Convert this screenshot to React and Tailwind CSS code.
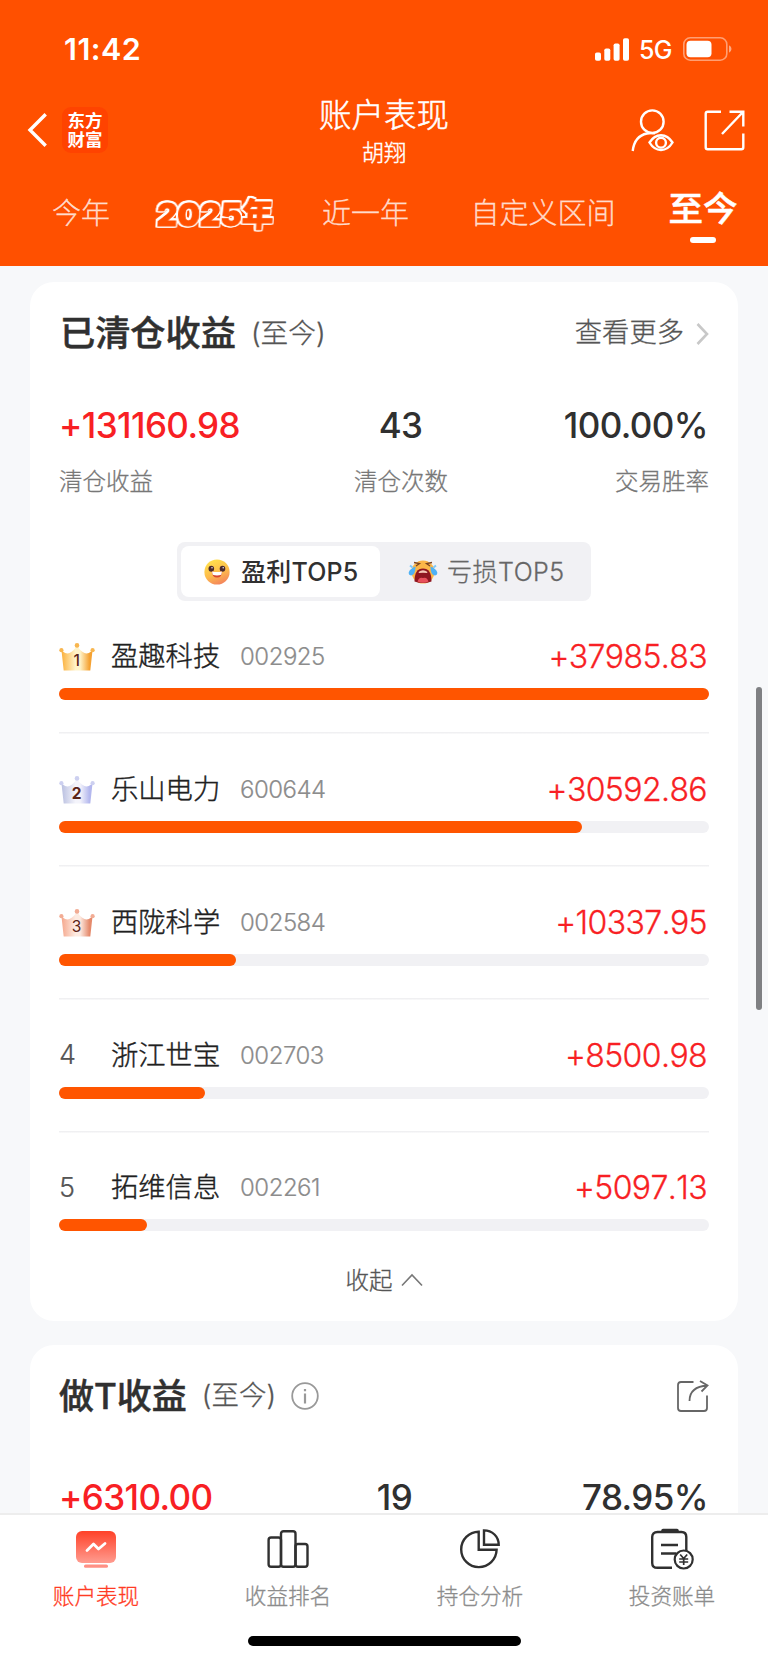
import React from "react";

const rows = [
  { rank: 1, name: "盈趣科技", code: "002925", value: "+37985.83", width: 100 },
  { rank: 2, name: "乐山电力", code: "600644", value: "+30592.86", width: 80.5 },
  { rank: 3, name: "西陇科学", code: "002584", value: "+10337.95", width: 27.2 },
  { rank: 4, name: "浙江世宝", code: "002703", value: "+8500.98", width: 22.5 },
  { rank: 5, name: "拓维信息", code: "002261", value: "+5097.13", width: 13.5 },
];

const crowns = {
  1: { edge: "#fbb03b", mid: "#fff3c9", end: "#f5a233", dot: "#f8b64f", weight: 500 },
  2: { edge: "#b9bfe0", mid: "#f4f4fb", end: "#b4b8ee", dot: "#cdd0f0", weight: 700 },
  3: { edge: "#f5a78c", mid: "#fdebe2", end: "#e58a6c", dot: "#f2ac94", weight: 400 },
};

function Crown({ rank }) {
  const c = crowns[rank];
  const id = "crown" + rank;
  return (
    <svg width="36" height="28" viewBox="0 0 36 28" className="block">
      <defs>
        <linearGradient id={id} x1="0" y1="0" x2="1" y2="0">
          <stop offset="0" stopColor={c.edge} />
          <stop offset="0.45" stopColor={c.mid} />
          <stop offset="0.6" stopColor={c.mid} />
          <stop offset="0.9" stopColor={c.end} />
        </linearGradient>
      </defs>
      <path d="M2.500 7.500Q7 11.500 10.500 10Q15 8 18 2.500Q21 8 25.500 10Q29 11.500 33.500 7.500L31.300 27.500H4.700Z" fill={"url(#" + id + ")"} />
      <circle cx="18" cy="2.400" r="2.300" fill={c.dot} />
      <circle cx="2.400" cy="7.200" r="2.100" fill={c.dot} />
      <circle cx="33.600" cy="7.200" r="2.100" fill={c.dot} />
      <text x="17.600" y="23" textAnchor="middle" fontFamily="Inter, sans-serif" fontSize="15.500" fontWeight={c.weight} fill="#5a2418">{rank}</text>
    </svg>
  );
}

function Smile() {
  return (
    <svg width="26" height="26" viewBox="0 0 26 26">
      <defs>
        <linearGradient id="smile" x1="0.3" y1="0" x2="0.7" y2="1">
          <stop offset="0" stopColor="#ffe14d" />
          <stop offset="0.55" stopColor="#fdbb4b" />
          <stop offset="1" stopColor="#f3805e" />
        </linearGradient>
      </defs>
      <circle cx="13" cy="13" r="12.600" fill="url(#smile)" />
      <ellipse cx="7.300" cy="9.700" rx="2.800" ry="3" fill="#4a2a2c" />
      <ellipse cx="18.500" cy="9.700" rx="2.800" ry="3" fill="#4a2a2c" />
      <circle cx="8" cy="8.700" r="0.700" fill="#fff" />
      <circle cx="19.200" cy="8.700" r="0.700" fill="#fff" />
      <path d="M8 12.500Q13 13.500 18 12.500Q18 18.500 13 18.500T8 12.500Z" fill="#d8452f" />
      <path d="M8 12.500Q13 13.500 18 12.500L17.300 15.800Q13 17.200 8.700 15.800Z" fill="#fff" />
    </svg>
  );
}

function Cry() {
  return (
    <svg width="30" height="24" viewBox="0 0 30 24">
      <circle cx="15" cy="12" r="11.500" fill="#fbb648" />
      <path d="M6 2.500L11.500 3.500L8 6M24 2.500L18.500 3.500L22 6" fill="none" stroke="#7a4422" strokeWidth="1.300" />
      <path d="M6.500 21.500Q6.500 8.500 15 8.500Q23.500 8.500 23.500 21.500Q15 24.500 6.500 21.500Z" fill="#8f1620" />
      <path d="M10.500 12Q15 8.500 19.500 12L19 13Q15 12.300 11 13Z" fill="#f6c9b8" />
      <path d="M9.500 21.500Q11 16.500 15 18Q19 16.500 20.500 21.500Q15 24 9.500 21.500Z" fill="#e8505b" />
      <path d="M7.500 6.500Q7.500 14.500 3.500 15.500Q0.500 15.500 0.700 12.500Q1.500 9 7.500 6.500ZM22.500 6.500Q22.500 14.500 26.500 15.500Q29.500 15.500 29.300 12.500Q28.500 9 22.500 6.500Z" fill="#4fb2f5" />
      <path d="M2 5.500L4.500 7.500M28 5.500L25.500 7.500" stroke="#7cc8fa" strokeWidth="2" />
    </svg>
  );
}

function Header() {
  return (
    <header className="h-[266px] shrink-0 bg-[#ff5000] text-white">
      <div className="flex h-[98px] items-center justify-between pl-[64px] pr-[35px]">
        <div className="text-[30.500px] font-semibold tracking-[0.5px]">11:42</div>
        <div className="flex items-center">
          <svg width="34" height="23" viewBox="0 0 34 23" fill="#fff">
            <rect x="0" y="14.500" width="6" height="8.300" rx="1.800" />
            <rect x="9.300" y="10.500" width="6" height="12.300" rx="1.800" />
            <rect x="18.600" y="5.500" width="6" height="17.300" rx="1.800" />
            <rect x="28" y="0.300" width="6" height="22.500" rx="1.800" />
          </svg>
          <span className="ml-[10px] mt-[2px] w-[34px] text-[25px] font-medium leading-none tracking-[-0.600px]">5G</span>
          <svg className="ml-[10px]" width="50" height="24" viewBox="0 0 50 24">
            <rect x="0.800" y="0.800" width="43" height="22.400" rx="6.500" fill="none" stroke="#fff" strokeOpacity="0.45" strokeWidth="1.600" />
            <rect x="3.500" y="3.800" width="25" height="16.400" rx="4" fill="#fff" />
            <path d="M46 8.200Q48.500 9.500 48.500 12T46 15.800Z" fill="#fff" fillOpacity="0.5" />
          </svg>
        </div>
      </div>
      <div className="grid h-[74px] grid-cols-[1fr_140px_1fr] items-start">
        <div className="flex items-center pl-[27px] pt-[9px]">
          <svg width="20" height="34" viewBox="0 0 20 34" fill="none" stroke="#fff" strokeWidth="3.400" strokeLinecap="square">
            <path d="M17.500 2.500L3 17L17.500 31.500" />
          </svg>
          <div className="ml-[15px] flex h-[46px] w-[46px] flex-col items-center justify-center rounded-[9px] bg-[#ff4300] text-[17.500px] font-bold leading-[19.500px]">
            <span>东方</span>
            <span>财富</span>
          </div>
        </div>
        <div className="flex flex-col items-center pt-[1px]">
          <div className="h-[38px] whitespace-nowrap text-[32.500px] font-light leading-[33px] [-webkit-text-stroke:0.5px]">账户表现</div>
          <div className="mt-[1px] h-[30px] text-[22.300px] font-light leading-[30px] [-webkit-text-stroke:0.4px]">胡翔</div>
        </div>
        <div className="flex items-center justify-end gap-[30px] pr-[23px] pt-[11px]">
          <svg width="43" height="43" viewBox="0 0 43 43" fill="none" stroke="#fff" strokeWidth="2.400">
            <circle cx="21.300" cy="12.700" r="11.300" />
            <path d="M1.700 42Q3.500 27 16 24.500Q19 23.800 24 24.300" />
            <path d="M18.500 33.500Q23 26.200 30 26.200T41.500 33.500Q37 41 30 41T18.500 33.500Z" />
            <circle cx="30" cy="33.700" r="4.900" />
          </svg>
          <svg width="41" height="41" viewBox="0 0 41 41" fill="none" stroke="#fff" strokeWidth="2.400">
            <path d="M17 1.700H3.700Q1.700 1.700 1.700 3.700V37.300Q1.700 39.300 3.700 39.300H37.300Q39.300 39.300 39.300 37.300V23.500M25.500 1.700H39.300V16.500M39 2L18 24" />
          </svg>
        </div>
      </div>
      <div className="flex h-[94px] items-start pt-[19px] text-[29px] leading-[46px] text-white/75">
        <div className="ml-[52px] w-[101px] whitespace-nowrap font-light [-webkit-text-stroke:0.3px]">今年</div>
        <div className="w-[169px]">
          <div className="w-fit origin-left -skew-x-3 whitespace-nowrap pl-[4px] pt-[1px] text-[31.500px] font-black tracking-[0.200px] text-[#ff5000] [-webkit-text-stroke:0.900px_#ff5000] [filter:drop-shadow(1.600px_0_0_#fff)_drop-shadow(-1.600px_0_0_#fff)_drop-shadow(0_1.600px_0_#fff)_drop-shadow(0_-1.600px_0_#fff)]">2025年</div>
        </div>
        <div className="w-[148.500px] whitespace-nowrap font-light [-webkit-text-stroke:0.3px]">近一年</div>
        <div className="w-[197.500px] whitespace-nowrap font-light [-webkit-text-stroke:0.3px]">自定义区间</div>
        <div className="flex w-[70px] flex-col items-center whitespace-nowrap font-medium text-white">
          <span className="-mt-[5px] text-[34.500px] [-webkit-text-stroke:0.5px]">至今</span>
          <span className="mt-[5px] h-[6px] w-[26px] rounded-full bg-white" />
        </div>
      </div>
    </header>
  );
}

function Stat({ value, label, className }) {
  return (
    <div className={"flex flex-1 flex-col " + className}>
      <span className="pr-[1px] text-[35px] font-medium leading-[42px] tracking-[-0.600px]">{value}</span>
      {label && <span className="mt-[18px] text-[23.500px] font-light leading-[36px] text-[#777] [-webkit-text-stroke:0.3px]">{label}</span>}
    </div>
  );
}

function ClearedCard() {
  return (
    <section className="h-[1039px] shrink-0 rounded-[24px] bg-white px-[29px] pt-[27px]">
      <div className="flex h-[49px] items-center">
        <h2 className="pl-[1px] text-[35.200px] font-medium text-[#303030] [-webkit-text-stroke:0.5px]">已清仓收益</h2>
        <span className="ml-[15px] text-[27.700px] font-light text-[#555] [-webkit-text-stroke:0.3px]">(至今)</span>
        <span className="ml-auto text-[27.300px] font-light text-[#555] [-webkit-text-stroke:0.3px]">查看更多</span>
        <svg className="ml-[11px]" width="14" height="24" viewBox="0 0 14 24" fill="none" stroke="#c8c8c8" strokeWidth="2.600">
          <path d="M2.500 2L12 12L2.500 22" />
        </svg>
      </div>
      <div className="mt-[46px] flex">
        <Stat value="+131160.98" label="清仓收益" className="items-start text-[#f81f24]" />
        <Stat value="43" label="清仓次数" className="items-center pl-[34px] text-[#303030]" />
        <Stat value="100.00%" label="交易胜率" className="items-end text-[#303030]" />
      </div>
      <div className="mx-auto mt-[42px] flex h-[59px] w-[414px] rounded-[8px] bg-[#f1f1f4] p-[4px] text-[25px]">
        <div className="flex w-[199px] items-center rounded-[8px] bg-white pl-[23px] font-medium text-[#303030]">
          <Smile />
          <span className="ml-[11px] mt-[2px] tracking-[0.200px]">盈利TOP5</span>
        </div>
        <div className="flex items-center pl-[28px] font-light text-[#666] [-webkit-text-stroke:0.3px]">
          <Cry />
          <span className="ml-[9px] mt-[2px] tracking-[0.500px]">亏损TOP5</span>
        </div>
      </div>
      <ul className="mt-[35px]">
        {rows.map((r, i) => (
          <li key={r.rank} className={"h-[132.850px]" + (i < 4 ? " bg-[linear-gradient(#f0f0f2,#f0f0f2)] bg-[length:100%_1.500px] bg-[position:0_96px] bg-no-repeat" : "")}>
            <div className="flex h-[42px] items-center">
              <span className="w-[52px] text-[27px] font-light text-[#555] [-webkit-text-stroke:0.2px]">{r.rank < 4 ? <Crown rank={r.rank} /> : r.rank}</span>
              <span className="w-[129px] pt-[1px] text-[27.300px] font-light text-[#202020] [-webkit-text-stroke:0.4px]">{r.name}</span>
              <span className="text-[24px] font-light tracking-[-0.500px] text-[#8c8c8c] [-webkit-text-stroke:0.2px]">{r.code}</span>
              <span className="ml-auto pr-[2px] text-[32px] font-light tracking-[-0.600px] text-[#f81f24] [-webkit-text-stroke:0.3px] [font-kerning:none]">{r.value}</span>
            </div>
            <div className="mt-[10px] h-[12px] rounded-full bg-[#f1f1f4]">
              <div className="h-full rounded-full bg-[#ff5500]" style={{ width: r.width + "%" }} />
            </div>
          </li>
        ))}
      </ul>
      <div className="-mt-[38px] flex h-[36px] items-center justify-center text-[23.500px] font-light text-[#555] [-webkit-text-stroke:0.3px]">
        收起
        <svg className="ml-[8px]" width="22" height="14" viewBox="0 0 22 14" fill="none" stroke="#777" strokeWidth="1.600">
          <path d="M1 12.500L11 2L21 12.500" />
        </svg>
      </div>
    </section>
  );
}

function TradingCard() {
  return (
    <section className="mt-[24px] h-[400px] shrink-0 rounded-[24px] bg-white px-[29px] pt-[27px]">
      <div className="flex h-[48px] items-center">
        <h2 className="text-[35px] font-medium text-[#303030] [-webkit-text-stroke:0.5px]">做T收益</h2>
        <span className="ml-[15px] text-[27.500px] font-light text-[#555] [-webkit-text-stroke:0.3px]">(至今)</span>
        <svg className="ml-[15px]" width="28" height="28" viewBox="0 0 28 28" fill="none" stroke="#999" strokeWidth="1.800">
          <circle cx="14" cy="14" r="12.800" />
          <path d="M14 11.500V21.500M14 7V9.200" strokeWidth="2.200" />
        </svg>
        <svg className="ml-auto" width="33" height="33" viewBox="0 0 33 33" fill="none" stroke="#666" strokeWidth="1.800">
          <path d="M17.500 2H5Q2 2 2 5V28Q2 31 5 31H28Q31 31 31 28V15.500" />
          <path d="M13.500 21Q13.500 6.500 31.500 5.500M24 1L31.500 5.500L25.500 11.500" />
        </svg>
      </div>
      <div className="mt-[56px] flex">
        <Stat value="+6310.00" className="items-start text-[#f81f24]" />
        <Stat value="19" className="items-center pl-[22px] text-[#303030]" />
        <Stat value="78.95%" className="items-end text-[#303030]" />
      </div>
    </section>
  );
}

function NavItem({ label, active, children }) {
  return (
    <div className="flex flex-1 flex-col items-center">
      <svg width="44" height="42" viewBox="0 0 44 42" fill="none" stroke="#303030" strokeWidth="2.400">{children}</svg>
      <span className={"mt-[9px] text-[21.600px] font-light leading-[35px] [-webkit-text-stroke:0.3px] " + (active ? "text-[#ff3b24]" : "text-[#8c8c8c]")}>{label}</span>
    </div>
  );
}

function BottomNav() {
  return (
    <nav className="h-[150px] shrink-0 border-t-2 border-[#ededed] bg-white">
      <div className="flex h-[121px] pt-[13px]">
        <NavItem label="账户表现" active>
          <defs>
            <linearGradient id="screen" x1="0" y1="0" x2="0" y2="1">
              <stop offset="0" stopColor="#ff4128" />
              <stop offset="1" stopColor="#ff9c90" />
            </linearGradient>
          </defs>
          <rect x="2" y="3" width="40" height="32" rx="6" fill="url(#screen)" stroke="none" />
          <rect x="10" y="36.600" width="24" height="3.200" rx="1.600" fill="#ff9084" stroke="none" />
          <path d="M13 22.500L19.500 16L24.500 21L31 15.500" stroke="#fff" strokeWidth="2.800" strokeLinecap="round" strokeLinejoin="round" />
        </NavItem>
        <NavItem label="收益排名">
          <rect x="2.600" y="9.500" width="12.400" height="29.300" rx="2.500" />
          <rect x="15" y="3.200" width="14.500" height="35.600" rx="2.500" />
          <rect x="29.500" y="16" width="12" height="22.800" rx="2.500" />
        </NavItem>
        <NavItem label="持仓分析">
          <path d="M20.700 3.700A17.700 17.700 0 1 0 38.600 21.800H20.700Z" />
          <path d="M26 2.400V16.800H40.700Q40.700 10.500 36.500 6.500Q32 2.400 26 2.400Z" />
        </NavItem>
        <NavItem label="投资账单">
          <path d="M22 39.800H7.500Q2.200 39.800 2.200 35V9Q2.200 4 7.500 4H31.500Q36.300 4 36.300 9V24" />
          <path d="M13 2.500H27" strokeWidth="3.500" strokeLinecap="round" />
          <path d="M11 17H28M11 25.500H26" />
          <circle cx="33.700" cy="31.500" r="9" fill="#fff" strokeWidth="2.200" />
          <path d="M30.200 26.500L33.700 30.500L37.200 26.500M33.700 30.500V37M29.200 31H38.200M29.200 34H38.200" strokeWidth="1.700" />
        </NavItem>
      </div>
      <div className="mx-auto h-[10px] w-[273px] rounded-full bg-black" />
    </nav>
  );
}

export default function App() {
  return (
    <div className="relative flex h-[1663px] w-[768px] flex-col overflow-hidden bg-[#f7f8fa] font-['Inter','Noto_Sans_CJK_SC',sans-serif]">
      <Header />
      <main className="flex min-h-0 flex-1 flex-col overflow-hidden px-[30px] pt-[16px]">
        <ClearedCard />
        <TradingCard />
      </main>
      <BottomNav />
      <div className="absolute left-[756px] top-[687px] h-[323px] w-[6px] rounded-full bg-[#7f8083]" />
    </div>
  );
}
